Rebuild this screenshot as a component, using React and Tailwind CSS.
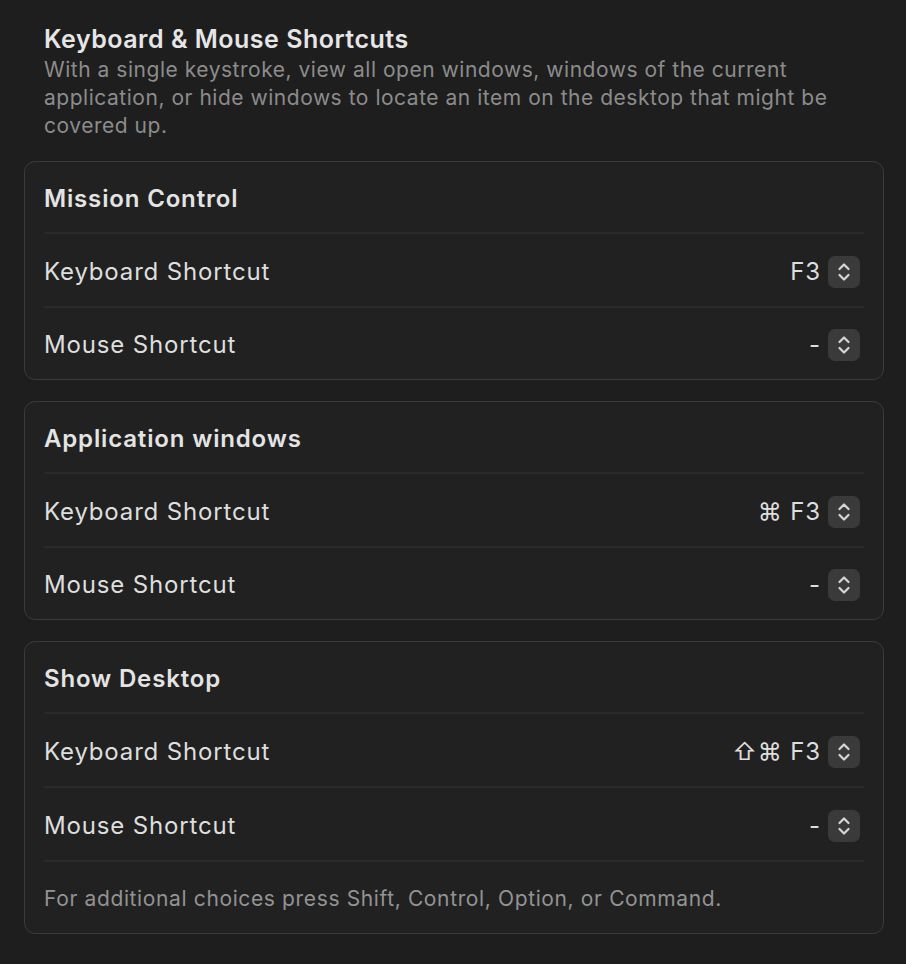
import React from "react";

const font = { fontFamily: "Inter, 'Noto Sans', sans-serif" };

const Stepper = () => (
  <div className="w-8 h-8 rounded-[7px] bg-[#3a3a3a] flex items-center justify-center">
    <svg width="16" height="22" viewBox="0 0 16 22" fill="none" stroke="#d6d6d6" strokeWidth="2.2" strokeLinecap="round" strokeLinejoin="round">
      <path d="M3.5 8 L8 3.5 L12.5 8" />
      <path d="M3.5 14 L8 18.5 L12.5 14" />
    </svg>
  </div>
);

const Row = ({ label, value, last }) => (
  <div className={`flex items-center justify-between pt-[3px] ${last ? "h-[71px]" : "h-[74px] border-b-2 border-[#2a2a2a]"}`}>
    <span className="text-[24px] tracking-[0.035em] text-[#dedede]">{label}</span>
    <div className="flex items-center gap-[7px] pr-1">
      <span className="text-[24px] tracking-[0.035em] text-[#dedede]">{value}</span>
      <Stepper />
    </div>
  </div>
);

const Card = ({ title, keyboard, footer }) => (
  <div className="ml-6 mr-[22px] rounded-[11px] border border-[#3b3b3b] bg-[#212121] px-[19px]">
    <div className="h-[72px] flex items-center pt-[3px] border-b-2 border-[#2a2a2a]">
      <h2 className="text-[24px] font-semibold tracking-[0.035em] text-[#e4e4e4]">{title}</h2>
    </div>
    <Row label="Keyboard Shortcut" value={keyboard} />
    <Row label="Mouse Shortcut" value="-" last={!footer} />
    {footer && (
      <div className="h-[71px] flex items-center pt-[2px]">
        <p className="text-[21px] tracking-[0.03em] text-[#939393]">{footer}</p>
      </div>
    )}
  </div>
);

export default function App() {
  return (
    <div className="min-h-screen bg-[#1e1e1e] pt-[22px] pb-6" style={font}>
      <div className="px-11 mb-[21px]">
        <h1 className="text-[25px] font-semibold tracking-[0.02em] text-[#e6e6e6] leading-[34px]">Keyboard &amp; Mouse Shortcuts</h1>
        <p className="text-[21px] leading-[28px] tracking-[0.025em] text-[#8c8c8c]">
          With a single keystroke, view all open windows, windows of the current application, or hide windows to locate an item on the desktop that might be covered up.
        </p>
      </div>
      <div className="flex flex-col gap-[21px]">
        <Card title="Mission Control" keyboard="F3" />
        <Card title="Application windows" keyboard="⌘ F3" />
        <Card
          title="Show Desktop"
          keyboard="⇧⌘ F3"
          footer="For additional choices press Shift, Control, Option, or Command."
        />
      </div>
    </div>
  );
}
